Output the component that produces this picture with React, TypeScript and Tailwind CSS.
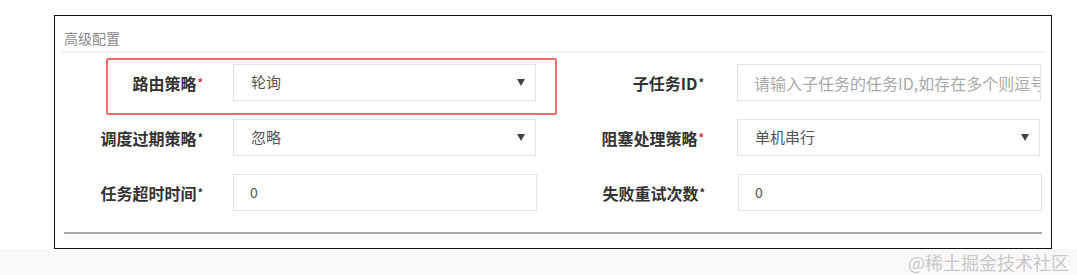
const font = "font-['Noto_Sans_CJK_SC','Noto_Sans',sans-serif]";

function Label({ text, required }: { text: string; required: "red" | "dark" }) {
  return (
    <span className="text-[16px] font-bold leading-none text-[#333]">
      {text}
      <span
        className={`relative -top-[3px] ml-[1px] text-[11px] ${
          required === "red" ? "text-[#e52a2a]" : "text-[#333]"
        }`}
      >
        *
      </span>
    </span>
  );
}

function SelectBox({ value }: { value: string }) {
  return (
    <div className="flex h-[37px] w-[303px] items-center justify-between border border-[#e3e3e3] bg-white pl-[17px] pr-[10px]">
      <span className="text-[15px] text-[#555]">{value}</span>
      <svg width="8" height="7" viewBox="0 0 8 7">
        <path d="M0 0 H8 L4 7 Z" fill="#444" />
      </svg>
    </div>
  );
}

function TextBox({ value, placeholder }: { value?: string; placeholder?: string }) {
  return (
    <div className="flex h-[37px] w-[304px] items-center overflow-hidden whitespace-nowrap border border-[#e3e3e3] bg-white pl-[16px]">
      {value ? (
        <span className="text-[14px] text-[#555]">{value}</span>
      ) : (
        <span className="text-[16px] text-[#aaa]">{placeholder}</span>
      )}
    </div>
  );
}

export default function App() {
  const rows = [
    {
      left: { label: "路由策略", req: "red" as const, field: <SelectBox value="轮询" /> },
      right: {
        label: "子任务ID",
        req: "dark" as const,
        field: <TextBox placeholder="请输入子任务的任务ID,如存在多个则逗号分隔" />,
      },
    },
    {
      left: { label: "调度过期策略", req: "dark" as const, field: <SelectBox value="忽略" /> },
      right: { label: "阻塞处理策略", req: "red" as const, field: <SelectBox value="单机串行" /> },
    },
    {
      left: { label: "任务超时时间", req: "dark" as const, field: <TextBox value="0" /> },
      right: { label: "失败重试次数", req: "dark" as const, field: <TextBox value="0" /> },
    },
  ];

  return (
    <div className={`flex h-[275px] w-[1077px] flex-col bg-white ${font}`}>
      <div className="h-[15px]" />
      <div className="flex">
        <div className="w-[54px]" />
        <div className="relative flex h-[234px] w-[998px] flex-col border border-[#111] bg-white">
          <div className="mx-[7px] mt-[9px] border-b-2 border-[#f1f1f1] px-[2px] pb-[2px]">
            <span className="text-[14px] leading-[20px] text-[#8a8a8a]">高级配置</span>
          </div>

          <div className="mt-[11px] flex flex-col gap-[18px]">
            {rows.map((row, i) => (
              <div key={i} className="flex items-center">
                <div className="flex w-[178px] justify-end pr-[30px]">
                  <Label text={row.left.label} required={row.left.req} />
                </div>
                {row.left.field}
                <div className="flex w-[201px] justify-end pr-[33px]">
                  <Label text={row.right.label} required={row.right.req} />
                </div>
                {row.right.field}
              </div>
            ))}
          </div>

          <div className="mx-[9px] mt-[21px] h-[2px] bg-[#a9a9a9]" />

          {/* annotation box around the routing field */}
          <div className="pointer-events-none absolute left-[51px] top-[42px] h-[57px] w-[451px] rounded-[2px] border-2 border-[#ef6b6b]" />
        </div>
      </div>
      <div className="flex flex-1 items-center justify-end bg-[#f8f8f8] pr-[8px]">
        <span className="text-[18px] leading-none text-[#c9c9c9]">@稀土掘金技术社区</span>
      </div>
    </div>
  );
}
